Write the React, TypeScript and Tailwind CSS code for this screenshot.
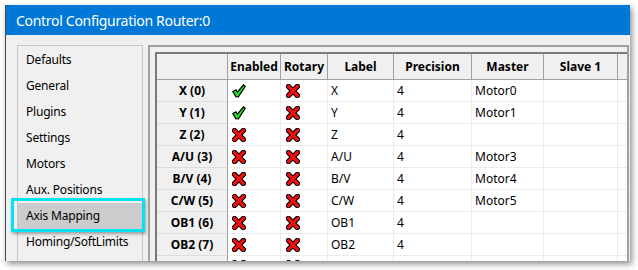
import React from "react"

const font = { fontFamily: '"Noto Sans", "Liberation Sans", sans-serif' }

const pages = [
  "Defaults",
  "General",
  "Plugins",
  "Settings",
  "Motors",
  "Aux. Positions",
  "Axis Mapping",
  "Homing/SoftLimits",
]

const headers = ["", "Enabled", "Rotary", "Label", "Precision", "Master", "Slave 1", ""]

const rows = [
  { name: "X (0)", enabled: true, label: "X", master: "Motor0" },
  { name: "Y (1)", enabled: true, label: "Y", master: "Motor1" },
  { name: "Z (2)", enabled: false, label: "Z", master: "" },
  { name: "A/U (3)", enabled: false, label: "A/U", master: "Motor3" },
  { name: "B/V (4)", enabled: false, label: "B/V", master: "Motor4" },
  { name: "C/W (5)", enabled: false, label: "C/W", master: "Motor5" },
  { name: "OB1 (6)", enabled: false, label: "OB1", master: "" },
  { name: "OB2 (7)", enabled: false, label: "OB2", master: "" },
  { name: "OB3 (8)", enabled: false, label: "OB3", master: "" },
]

const Check = () => (
  <svg width="14" height="14" viewBox="0 0 14 14">
    <path
      d="M0.8 7.5 L4 5.8 L5.4 8.2 L11.5 0.8 L13.2 2.4 L6.4 12.8 L3.8 12.6 Z"
      fill="#22e022"
      stroke="#000"
      strokeWidth="1.2"
      strokeLinejoin="miter"
    />
  </svg>
)

const Cross = () => (
  <svg width="14" height="14" viewBox="0 0 14 14">
    <g strokeLinecap="square">
      <path d="M2.6 2.6 L11.2 11.4 M11.4 2.4 L2.6 11.4" stroke="#000" strokeWidth="5.4" />
      <path d="M2.6 2.6 L11.2 11.4 M11.4 2.4 L2.6 11.4" stroke="#f01010" strokeWidth="3.2" />
    </g>
  </svg>
)

const App = () => {
  return (
    <div className="w-[638px] h-[270px] bg-white pt-[5px] pl-[5px]" style={font}>
      <div className="w-[625px] h-[256px] flex flex-col overflow-hidden border-l border-[#4a4a4a] shadow-[2px_3px_6px_rgba(0,0,0,0.45)]">
        <div className="h-[30px] shrink-0 bg-[#0078d7] pl-[10px] flex items-center text-white text-[14px] tracking-[-0.3px]">
          Control Configuration Router:0
        </div>
        <div className="flex-1 min-h-0 bg-[#f0f0f0] flex pt-[10px] pl-[11px] text-[12px] text-black">
          <div className="w-[126px] shrink-0 border border-b-0 border-[#c8c8c8] pt-[1px] flex flex-col tracking-[-0.2px]">
            {pages.map((p) => (
              <div
                key={p}
                className={`relative h-[26px] shrink-0 flex items-center pl-[8px] ${
                  p === "Axis Mapping" ? "bg-[#cccccc]" : ""
                }`}
              >
                {p}
                {p === "Axis Mapping" && (
                  <span className="absolute -left-[7px] -right-[3px] -top-[5px] -bottom-[3px] border-[3px] border-[#00e3f0] shadow-[1px_2px_3px_rgba(0,0,0,0.35)]" />
                )}
              </div>
            ))}
          </div>
          <div className="flex-1 min-w-0 ml-[5px] mr-[1px] border-2 border-b-0 border-[#a0a0a0] pt-[5px] pl-[5px] overflow-hidden">
            <div className="border-t-2 border-l-2 border-[#7a7a7a] bg-white w-max">
              <div className="grid grid-cols-[71px_53px_47px_66px_78px_72px_74px_60px]">
                {headers.map((h, i) => (
                  <div
                    key={i}
                    className="h-[26px] bg-[#f0f0f0] border-r border-b border-[#a0a0a0] flex items-center justify-center font-bold"
                  >
                    {h}
                  </div>
                ))}
                {rows.map((r) => (
                  <React.Fragment key={r.name}>
                    <div className="h-[22px] bg-[#f0f0f0] border-r border-r-[#a0a0a0] border-b border-b-[#dcdcdc] flex items-center justify-center font-bold">
                      {r.name}
                    </div>
                    <div className="h-[22px] border-r border-b border-[#ececec] flex items-center pl-[4px]">
                      {r.enabled ? <Check /> : <Cross />}
                    </div>
                    <div className="h-[22px] border-r border-b border-[#ececec] flex items-center pl-[5px]">
                      <Cross />
                    </div>
                    <div className="h-[22px] border-r border-b border-[#ececec] flex items-center pl-[3px]">
                      {r.label}
                    </div>
                    <div className="h-[22px] border-r border-b border-[#ececec] flex items-center pl-[3px]">
                      4
                    </div>
                    <div className="h-[22px] border-r border-b border-[#ececec] flex items-center pl-[3px]">
                      {r.master}
                    </div>
                    <div className="h-[22px] border-r border-b border-[#ececec]" />
                    <div className="h-[22px] border-r border-b border-[#ececec]" />
                  </React.Fragment>
                ))}
              </div>
            </div>
          </div>
        </div>
      </div>
    </div>
  )
}

export default App
